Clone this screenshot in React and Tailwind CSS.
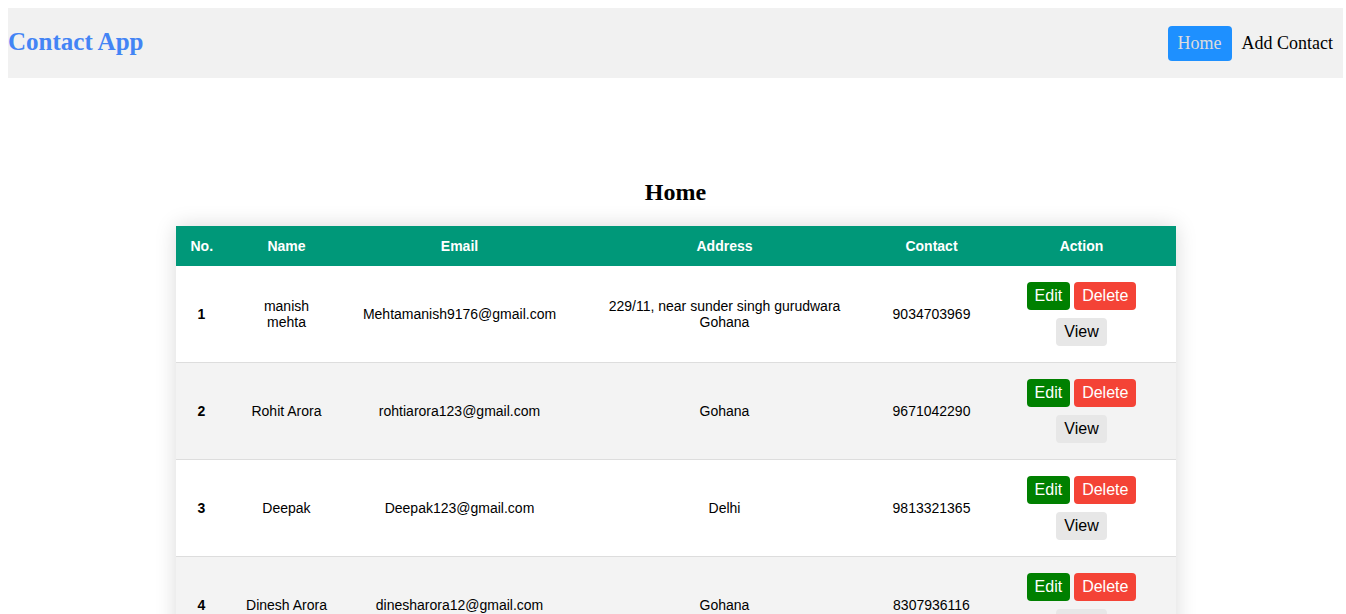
import React from "react";

const contacts = [
  { id: 1, name: "manish mehta", email: "Mehtamanish9176@gmail.com", address: "229/11, near sunder singh gurudwara Gohana", contact: "9034703969" },
  { id: 2, name: "Rohit Arora", email: "rohtiarora123@gmail.com", address: "Gohana", contact: "9671042290" },
  { id: 3, name: "Deepak", email: "Deepak123@gmail.com", address: "Delhi", contact: "9813321365" },
  { id: 4, name: "Dinesh Arora", email: "dinesharora12@gmail.com", address: "Gohana", contact: "8307936116" },
];

const serif = { fontFamily: '"Liberation Serif", "Times New Roman", serif' };

const Navbar = () => (
  <nav className="flex items-center justify-between h-[70px] bg-[#f1f1f1] mt-[8px]">
    <div className="text-[25px] font-bold text-[#4384f5] leading-none mb-[3px]">Contact App</div>
    <div className="flex items-center text-[18px]">
      <a className="px-[10px] py-[7px] rounded-[4px] bg-[#1e90ff] text-[#dcdcdc] leading-[21px]">Home</a>
      <a className="px-[10px] py-[7px] text-black leading-[21px]">Add Contact</a>
    </div>
  </nav>
);

const Row = ({ c, i }) => (
  <tr className={`border-b border-[#dddddd] ${i % 2 === 1 ? "bg-[#f3f3f3]" : "bg-white"}`}>
    <td className="px-[15px] py-[16px] font-bold">{c.id}</td>
    <td className="px-[15px] py-[16px]">
      <div className="mx-auto max-w-[85px] leading-[16px]">{c.name}</div>
    </td>
    <td className="px-[15px] py-[16px]">{c.email}</td>
    <td className="px-[15px] py-[16px] leading-[16px]">{c.address}</td>
    <td className="px-[15px] py-[16px]">{c.contact}</td>
    <td className="px-[15px] py-[16px]">
      <div className="flex flex-col items-center gap-[8px] text-[16px] leading-[18px]">
        <div className="flex gap-[4px]">
          <button className="px-[8px] py-[5px] rounded-[4px] bg-[#008000] text-white">Edit</button>
          <button className="px-[8px] py-[5px] rounded-[4px] bg-[#f44336] text-white">Delete</button>
        </div>
        <button className="px-[8px] py-[5px] rounded-[4px] bg-[#e7e7e7] text-black">View</button>
      </div>
    </td>
  </tr>
);

export default function App() {
  return (
    <div className="pl-[8px] pr-[3px] pb-[20px] bg-white min-h-screen" style={serif}>
      <Navbar />
      <h2 className="text-center text-[24px] font-bold leading-[28px] mt-[100px] mb-[20px]">Home</h2>
      <div className="flex justify-center">
        <table
          className="w-[1000px] table-fixed border-collapse text-[14px] text-center shadow-[0_0_20px_rgba(0,0,0,0.15)]"
          style={{ fontFamily: '"Liberation Sans", Arial, sans-serif' }}
        >
          <colgroup>
            <col className="w-[52px]" />
            <col className="w-[118px]" />
            <col className="w-[228px]" />
            <col className="w-[302px]" />
            <col className="w-[112px]" />
            <col className="w-[188px]" />
          </colgroup>
          <thead>
            <tr className="bg-[#009879] text-white font-bold">
              <th className="px-[15px] py-[12px] leading-[16px]">No.</th>
              <th className="px-[15px] py-[12px] leading-[16px]">Name</th>
              <th className="px-[15px] py-[12px] leading-[16px]">Email</th>
              <th className="px-[15px] py-[12px] leading-[16px]">Address</th>
              <th className="px-[15px] py-[12px] leading-[16px]">Contact</th>
              <th className="px-[15px] py-[12px] leading-[16px]">Action</th>
            </tr>
          </thead>
          <tbody>
            {contacts.map((c, i) => (
              <Row key={c.id} c={c} i={i} />
            ))}
          </tbody>
        </table>
      </div>
    </div>
  );
}
